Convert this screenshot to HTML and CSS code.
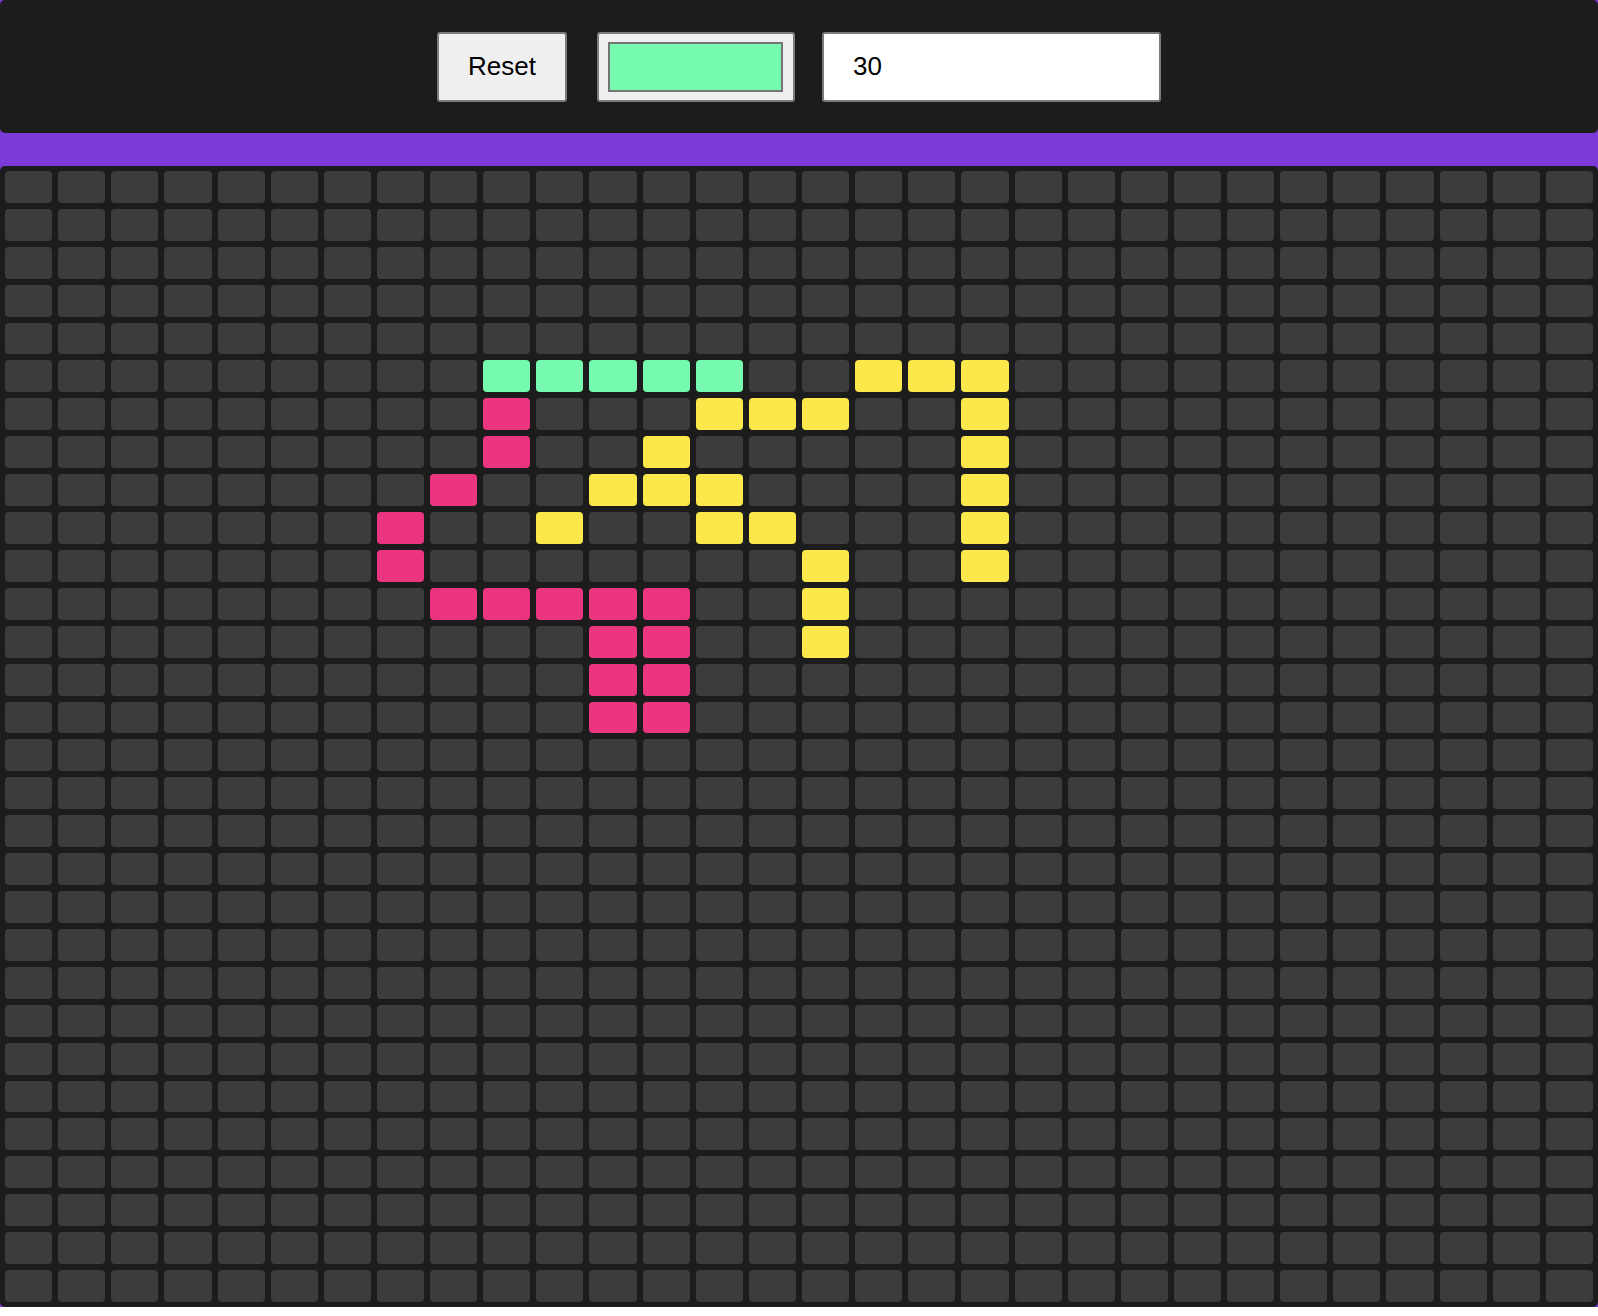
FILE: index.html
```html
<!DOCTYPE html>
<html lang="en">
<head>
<meta charset="utf-8">
<title>Pixel Art</title>
<link rel="stylesheet" href="styles.css">
</head>
<body>
<div class="app">
  <header class="toolbar">
    <button class="btn reset-btn" type="button">Reset</button>
    <input class="color-picker" type="color" value="#75faaf">
    <input class="size-input" type="text" value="30">
  </header>
  <main class="board" id="board"></main>
</div>
<script src="script.js"></script>
</body>
</html>
```

FILE: styles.css
```css
html {
  background: #ffffff;
}

body {
  margin: 0;
  font-family: "Liberation Sans", Arial, sans-serif;
}

.app {
  display: flex;
  flex-direction: column;
  gap: 33px;
  background: #7c3ad8;
}

.toolbar {
  height: 133px;
  background: #1c1c1c;
  border-radius: 5px;
  display: flex;
  align-items: center;
  justify-content: center;
}

.btn {
  box-sizing: border-box;
  width: 130px;
  height: 70px;
  margin-right: 30px;
  padding: 0;
  background: #efefef;
  border: 2px solid #7b7b7b;
  border-radius: 3px;
  color: #000;
  font-family: "Liberation Sans", Arial, sans-serif;
  font-size: 26px;
}

.color-picker {
  -webkit-appearance: none;
  appearance: none;
  box-sizing: border-box;
  width: 198px;
  height: 70px;
  margin: 0 27px 0 0;
  padding: 0;
  background: #efefef;
  border: 2px solid #7b7b7b;
  border-radius: 3px;
}

.color-picker::-webkit-color-swatch-wrapper {
  padding: 8px 10px 8px 9px;
}

.color-picker::-webkit-color-swatch {
  border: 2px solid #757575;
  border-radius: 0;
}

.color-picker::-moz-color-swatch {
  border: 2px solid #757575;
  border-radius: 0;
}

.size-input {
  box-sizing: border-box;
  width: 339px;
  height: 70px;
  margin: 0;
  padding: 0 0 0 29px;
  background: #ffffff;
  border: 2px solid #7b7b7b;
  border-radius: 3px;
  color: #000;
  font-family: "Liberation Sans", Arial, sans-serif;
  font-size: 26px;
}

.board {
  box-sizing: border-box;
  height: 1141px;
  padding: 5px;
  background: #1c1c1c;
  border-radius: 5px;
  display: grid;
  grid-template-columns: repeat(30, 1fr);
  grid-template-rows: repeat(30, 1fr);
  gap: 6px;
}

.cell {
  background: #3c3c3c;
  border-radius: 4px;
}

.cell-mint {
  background: #75faaf;
}

.cell-pink {
  background: #ec3580;
}

.cell-yellow {
  background: #fde84c;
}
```

FILE: script.js
```js
(function () {
  var art = [];
  art[5]  = ".........mmmmm..yyy...........";
  art[6]  = ".........p...yyy..y...........";
  art[7]  = ".........p..y.....y...........";
  art[8]  = "........p..yyy....y...........";
  art[9]  = ".......p..y..yy...y...........";
  art[10] = ".......p.......y..y...........";
  art[11] = "........ppppp..y..............";
  art[12] = "...........pp..y..............";
  art[13] = "...........pp.................";
  art[14] = "...........pp.................";

  var names = { m: "cell-mint", p: "cell-pink", y: "cell-yellow" };
  var board = document.getElementById("board");
  var frag = document.createDocumentFragment();

  for (var r = 0; r < 30; r++) {
    var row = art[r] || "";
    for (var c = 0; c < 30; c++) {
      var cell = document.createElement("div");
      cell.className = "cell";
      var ch = row.charAt(c);
      if (names[ch]) {
        cell.className += " " + names[ch];
      }
      frag.appendChild(cell);
    }
  }
  board.appendChild(frag);
})();
```
